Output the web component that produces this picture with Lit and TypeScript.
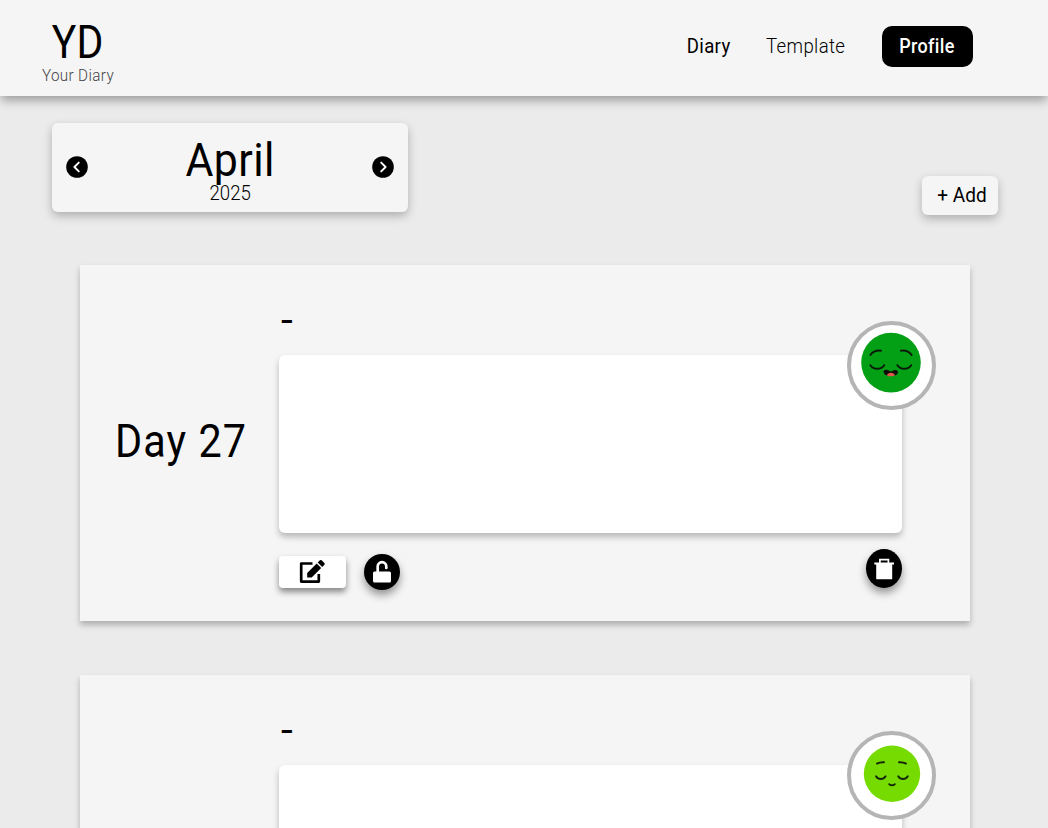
import { LitElement, html, css, svg } from "lit";
import { customElement, property } from "lit/decorators.js";

@customElement("mood-face")
class MoodFace extends LitElement {
  @property() mood = "great";

  static styles = css`
    :host { display: block; width: 81px; height: 81px; }
    svg { display: block; width: 81px; height: 81px; fill: none; stroke-linecap: round; }
  `;

  render() {
    const great = svg`
      <circle cx="40" cy="37.6" r="29.8" fill="#03a015"/>
      <g stroke="#0b1a08" stroke-width="2">
        <path d="M19.4 30C21.5 27 25 25.2 30 25.7"/>
        <path d="M50 25.7C55 25.2 58.5 27 60.6 30"/>
        <path d="M19.4 40.2C22.6 45 30 45 33.2 40.2"/>
        <path d="M46.4 40.2C49.6 45 57 45 60.2 40.2"/>
      </g>
      <path d="M35.2 44.8C33 44.8 32 46.2 32.8 47.8C34.2 51 37 50.8 40 50.8C43 50.8 45.8 51 46.8 47.8C47.4 46 46 44.8 44.3 44.9C42 45.2 41.5 46.4 39.8 46.4C38 46.4 37.5 44.8 35.2 44.8Z" fill="#100c08"/>
      <path d="M35.9 50.4C36.6 46.9 43.3 46.9 44 50.3C41.8 51.7 38 51.7 35.9 50.4Z" fill="#e0584b"/>`;
    const good = svg`
      <circle cx="41" cy="38.8" r="28.2" fill="#76db00"/>
      <g stroke="#14260a" stroke-width="1.9">
        <path d="M26 28.6Q28.6 27 33 27.2"/>
        <path d="M48 27.2Q52.4 27 55 28.6"/>
        <path d="M25 41.2C27.4 45 32.2 45 34.6 41.2"/>
        <path d="M47.2 41.2C49.6 45 54.4 45 56.8 41.2"/>
        <path d="M38.2 49.2Q41 51.4 43.8 49.2"/>
      </g>`;
    return html`<svg viewBox="0 0 81 81">${this.mood === "great" ? great : good}</svg>`;
  }
}

@customElement("diary-entry")
class DiaryEntry extends LitElement {
  @property() day = "";
  @property() mood = "great";

  static styles = css`
    :host { display: block; font-family: Roboto, "Liberation Sans", sans-serif; }
    .card {
      display: grid; grid-template-columns: 199.4px 623px; box-sizing: border-box;
      width: 890px; height: 356px; background: #f5f5f5;
      box-shadow: 0 4px 6px rgba(0, 0, 0, 0.26);
    }
    .day { display: flex; align-items: center; justify-content: center; padding: 0 0 4px 3px; }
    .day span { font-size: 47px; line-height: 46px; letter-spacing: 1.2px; white-space: nowrap; transform: scaleX(0.88); }
    .title { height: 90px; padding: 36px 0 0 2px; box-sizing: border-box; font-size: 38px; line-height: 38px; }
    .title span { display: inline-block; transform: scaleX(1.12); transform-origin: left; }
    .text {
      position: relative; height: 178px; background: #fff; border-radius: 6px;
      box-shadow: 0 4px 6px rgba(0, 0, 0, 0.25);
    }
    .badge {
      position: absolute; right: -34px; top: -34px; width: 81px; height: 81px;
      border: 4px solid #b5b5b5; border-radius: 50%; background: #fff;
    }
    .actions { display: flex; padding-top: 16px; }
    .edit {
      display: flex; align-items: center; justify-content: center; box-sizing: border-box; padding-right: 2px;
      width: 67px; height: 32px; margin-top: 7px; background: #fff; border-radius: 4px;
      box-shadow: 0 4px 6px rgba(0, 0, 0, 0.45);
    }
    .round {
      display: flex; align-items: center; justify-content: center; width: 36px; height: 36px;
      border-radius: 50%; background: #000; box-shadow: 0 5px 8px rgba(0, 0, 0, 0.4);
    }
    .lock { margin: 5px 0 0 17.6px; }
    .trash { height: 39px; margin-left: auto; }
    svg { display: block; }
  `;

  render() {
    return html`
      <article class="card">
        <div class="day"><span>${this.day}</span></div>
        <div>
          <div class="title"><span>-</span></div>
          <div class="text"><div class="badge"><mood-face mood=${this.mood}></mood-face></div></div>
          <div class="actions">
            <div class="edit">
              <svg width="28" height="26" viewBox="0 0 28 26">
                <path d="M14.5 4.5H3.2V22.6H20.8V15" fill="none" stroke="#000" stroke-width="2.7" stroke-linejoin="round"/>
                <path d="M9.2 14L18.7 4.5L23.2 9L13.7 18.5H9.2Z" fill="#000"/>
                <path d="M19.7 3.5L21.9 1.3Q22.8.5 23.7 1.3L26.4 4Q27.2 4.9 26.4 5.8L24.2 8Z" fill="#000"/>
              </svg>
            </div>
            <div class="round lock">
              <svg width="20" height="24" viewBox="0 0 20 24">
                <path d="M5.7 12V6.5A4.3 4.3 0 0 1 14.3 6.5V8" fill="none" stroke="#fff" stroke-width="2.7" stroke-linecap="round"/>
                <rect x="1" y="11.6" width="18" height="11" rx="1.5" fill="#fff"/>
              </svg>
            </div>
            <div class="round trash">
              <svg width="20" height="22" viewBox="0 0 20 22">
                <path d="M5.9 5V1.6H14.4V5" fill="none" stroke="#fff" stroke-width="1.7"/>
                <path d="M.3 4.6H20V6.6H18.2V20.7Q18.2 21.2 17.7 21.2H2.7Q2.2 21.2 2.2 20.7V6.6H.3Z" fill="#fff"/>
              </svg>
            </div>
          </div>
        </div>
      </article>
    `;
  }
}

@customElement("app-root")
class AppRoot extends LitElement {
  static styles = css`
    :host {
      display: block; height: 828px; overflow: hidden; background: #ebebeb; color: #000;
      font-family: Roboto, "Liberation Sans", sans-serif;
    }
    header {
      display: flex; justify-content: space-between; box-sizing: border-box; height: 96px;
      padding: 0 75px 0 38px; background: #f5f5f5;
      box-shadow: 0 5px 10px -1px rgba(0, 0, 0, 0.36);
    }
    .brand { display: flex; flex-direction: column; align-items: center; width: 80px; padding-top: 14px; }
    .logo { font-size: 47px; line-height: 55px; transform: scaleX(0.87); }
    .tag { font-size: 16px; line-height: 14px; font-weight: 300; color: #444; white-space: nowrap; letter-spacing: 0.4px; transform: scaleX(0.95); }
    nav { display: flex; padding-top: 25px; height: 43px; align-items: center; font-size: 20px; }
    nav div { display: flex; justify-content: center; }
    .diary { width: 45px; }
    .template { width: 80px; margin: 0 36px 0 35px; font-weight: 300; }
    .profile {
      width: 91px; height: 41px; align-items: center; border-radius: 10px;
      background: #000; color: #fff; font-weight: 500;
    }
    nav span { line-height: 24px; padding-bottom: 2px; letter-spacing: 0.4px; }
    .diary span { transform: scaleX(0.93); }
    .template span { transform: scaleX(0.93); }
    .profile span { padding-right: 1px; transform: scaleX(0.9); }
    .toolbar { display: flex; justify-content: space-between; padding: 27px 50px 0 52.4px; height: 142px; box-sizing: border-box; }
    .month {
      display: flex; align-items: center; justify-content: space-between; box-sizing: border-box;
      width: 356px; height: 89px; padding: 0 14px 1px; background: #f5f5f5; border-radius: 6px;
      box-shadow: 0 4px 10px rgba(0, 0, 0, 0.26);
    }
    .label { display: flex; flex-direction: column; align-items: center; padding-top: 3px; }
    .name { font-size: 47px; line-height: 50px; letter-spacing: 0.5px; transform: scaleX(0.91); }
    .year { font-size: 20px; line-height: 17px; font-weight: 300; transform: scaleX(0.93); }
    .add {
      display: flex; align-items: center; justify-content: center; box-sizing: border-box;
      width: 76px; height: 39px; padding: 0 0 2px 4px; margin-top: 53px; border-radius: 6px; background: #f5f5f5;
      font-size: 20px; white-space: nowrap; box-shadow: 0 4px 10px rgba(0, 0, 0, 0.25);
    }
    .add span { transform: scaleX(0.95); }
    svg { display: block; }
    main { display: flex; flex-direction: column; gap: 53.5px; padding: 27px 0 0 80px; }
  `;

  arrow(d: string) {
    return html`<svg width="22" height="22" viewBox="0 0 22 22">
      <circle cx="11" cy="11" r="10.8" fill="#000"/>
      <path d=${d} fill="none" stroke="#fff" stroke-width="1.9" stroke-linecap="round" stroke-linejoin="round"/>
    </svg>`;
  }

  render() {
    return html`
      <header>
        <div class="brand"><span class="logo">YD</span><span class="tag">Your Diary</span></div>
        <nav>
          <div class="diary"><span>Diary</span></div>
          <div class="template"><span>Template</span></div>
          <div class="profile"><span>Profile</span></div>
        </nav>
      </header>
      <section class="toolbar">
        <div class="month">
          ${this.arrow("M12.8 6.6L8.4 11L12.8 15.4")}
          <div class="label"><span class="name">April</span><span class="year">2025</span></div>
          ${this.arrow("M9.2 6.6L13.6 11L9.2 15.4")}
        </div>
        <div class="add"><span>+ Add</span></div>
      </section>
      <main>
        <diary-entry day="Day 27" mood="great"></diary-entry>
        <diary-entry day="Day 26" mood="good"></diary-entry>
      </main>
    `;
  }
}
